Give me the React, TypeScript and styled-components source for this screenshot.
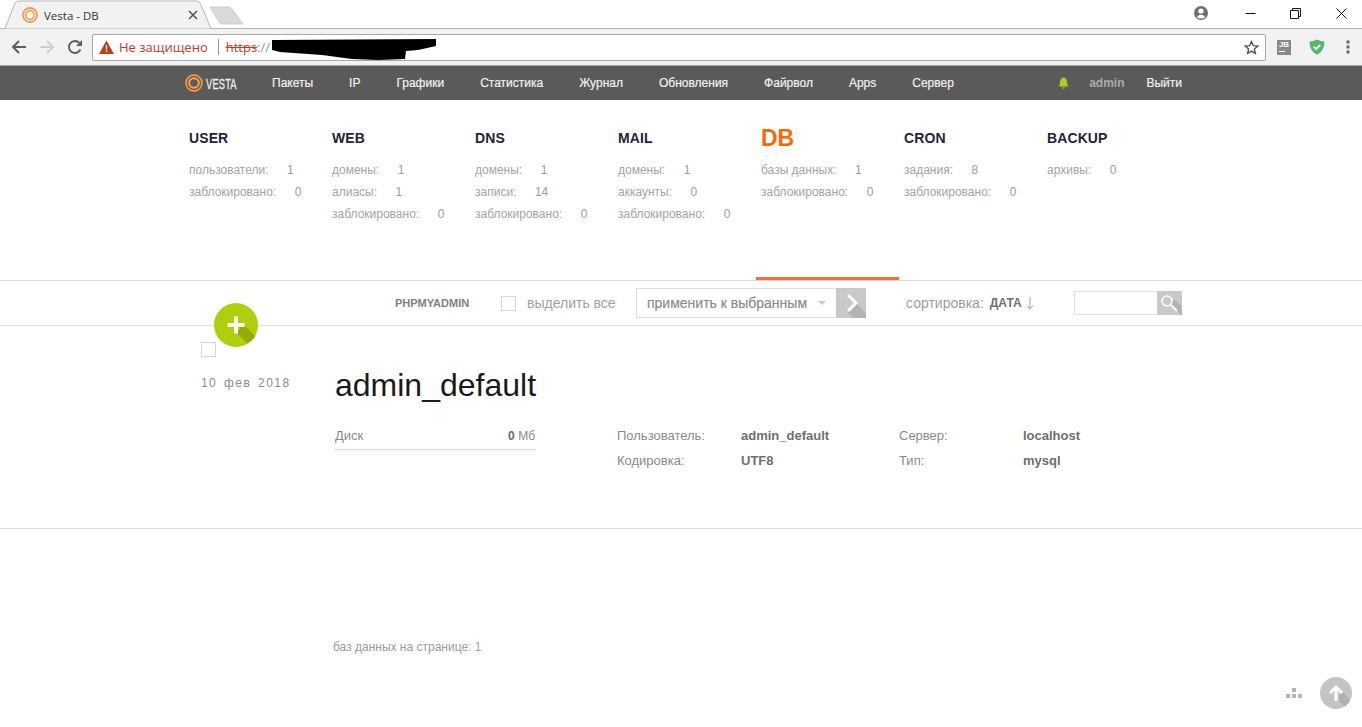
import React from "react";
import styled, {createGlobalStyle} from "styled-components";

const GlobalStyle = createGlobalStyle`
    html, body {
        margin: 0;
        padding: 0;
        background: #fff;
        font-family: "Liberation Sans", Arial, sans-serif;
    }
`;

const StyledRoot = styled.div`
    position: relative;
    width: 1362px;
    height: 727px;
    overflow: hidden;
`;

/* browser chrome */

const StyledTabStrip = styled.div`
    position: relative;
    height: 28px;
    display: flex;
    justify-content: flex-end;
    align-items: center;
    border-bottom: 1px solid #b5b5b5;
`;

const StyledTabShape = styled.svg`
    position: absolute;
    left: 0;
    top: 0;
`;

const StyledTabContent = styled.div`
    position: absolute;
    left: 22px;
    top: 6px;
    width: 176px;
    height: 18px;
    display: flex;
    align-items: center;
    gap: 6px;
    font-family: "Open Sans", sans-serif;
    font-size: 11.5px;
    color: #333;
`;

const StyledTabTitle = styled.span`
    flex: 1;
`;

const StyledWindowControls = styled.div`
    display: flex;
    align-items: center;
    height: 28px;
    margin-top: -2px;
`;

const StyledWindowButton = styled.div<{$width: number}>`
    width: ${props => props.$width}px;
    display: flex;
    justify-content: center;
    align-items: center;
`;

const StyledToolbar = styled.div`
    height: 37px;
    display: flex;
    align-items: center;
    background: #f2f2f2;
    padding-left: 4px;
    box-sizing: border-box;
    border-bottom: 1px solid #a8a8a8;
`;

const StyledNavIcon = styled.div`
    width: 29px;
    display: flex;
    justify-content: center;
    margin-right: -1px;
`;

const StyledAddressBar = styled.div`
    width: 1174px;
    height: 27px;
    margin-left: 4px;
    background: #fff;
    border: 1px solid #a9a9a9;
    border-radius: 2px;
    box-sizing: border-box;
    display: flex;
    align-items: center;
    padding-left: 6px;
    font-family: "Open Sans", sans-serif;
    font-size: 13px;
`;

const StyledInsecure = styled.span`
    color: #c5391f;
    margin-left: 5px;
    padding-right: 10px;
    border-right: 1px solid #9a9a9a;
    line-height: 16px;
`;

const StyledProtocol = styled.span`
    color: #c5391f;
    text-decoration: line-through;
    margin-left: 7px;
`;

const StyledSlashes = styled.span`
    color: #7a9ab0;
`;

const StyledRedaction = styled.svg`
    position: absolute;
    left: 272px;
    top: 38px;
`;

const StyledStar = styled.div`
    margin-left: auto;
    margin-right: 6px;
    display: flex;
`;

const StyledExtensions = styled.div`
    display: flex;
    align-items: center;
    margin-left: 11px;
    gap: 18px;
`;

const StyledJb = styled.div`
    width: 14px;
    height: 15px;
    background: #8a8a8a;
    color: #fff;
    font-size: 8px;
    font-weight: bold;
    line-height: 9px;
    text-align: center;

    &::after {
        content: "";
        display: block;
        width: 6px;
        height: 1px;
        margin: 2px 0 0 2px;
        background: #fff;
    }
`;

const StyledKebab = styled.svg`
    margin-left: 3px;
`;

/* panel nav */

const StyledNav = styled.div`
    height: 34px;
    background: #5a5a5a;
    display: flex;
    align-items: center;
    padding: 0 180px 0 185px;
    font-size: 12px;
    color: #f0f0f0;
    -webkit-text-stroke: 0.2px #f0f0f0;
`;

const StyledLogo = styled.div`
    display: flex;
    align-items: center;
    gap: 3px;
    margin-right: 35px;
    font-size: 15px;
`;

const StyledLogoText = styled.span`
    display: inline-block;
    width: 31px;
    transform: scaleX(0.62);
    transform-origin: left center;
    letter-spacing: 0.3px;
    -webkit-text-stroke: 0.3px #f0f0f0;
`;

const StyledMenu = styled.div`
    display: flex;
    gap: 36px;
`;

const StyledUserMenu = styled.div`
    margin-left: auto;
    display: flex;
    align-items: center;
`;

const StyledAdmin = styled.span`
    color: #a4adb0;
    font-weight: bold;
    -webkit-text-stroke: 0;
    margin-left: 20px;
    margin-right: 22px;
`;

/* stats */

const StyledStats = styled.div`
    height: 181px;
    padding-left: 189px;
    display: flex;
    align-items: flex-start;
    box-sizing: border-box;
    border-bottom: 1px solid #dddddd;
`;

const StyledStatColumn = styled.div<{$active?: boolean}>`
    position: relative;
    width: 143px;
    height: 180px;
    padding-top: 29px;
    box-sizing: border-box;

    ${props => props.$active && `
        &::after {
            content: "";
            position: absolute;
            left: -5px;
            bottom: 0;
            width: 143px;
            height: 3px;
            background: #f56b43;
        }
    `}
`;

const StyledStatTitle = styled.div<{$active?: boolean}>`
    height: 18px;
    line-height: 18px;
    margin-bottom: 12px;
    font-weight: bold;
    font-size: ${props => props.$active ? "23px" : "14px"};
    color: ${props => props.$active ? "#ff6701" : "#23233a"};
    letter-spacing: ${props => props.$active ? "0" : "0.1px"};
`;

const StyledStatRow = styled.div`
    height: 22px;
    line-height: 22px;
    font-size: 12px;
    color: #a3a3a3;
    white-space: nowrap;
`;

const StyledStatValue = styled.span`
    margin-left: 18.5px;
    color: #a09a92;
`;

/* action bar */

const StyledActionBar = styled.div`
    height: 45px;
    box-sizing: border-box;
    border-bottom: 1px solid #dddddd;
    display: flex;
    align-items: center;
    padding-left: 395px;
`;

const StyledPhpLink = styled.span`
    width: 106px;
    font-size: 11px;
    font-weight: bold;
    color: #7f7f7f;
`;

const StyledCheckbox = styled.div`
    width: 15px;
    height: 15px;
    box-sizing: border-box;
    background: #fff;
    border: 1px solid #d6d6d6;
`;

const StyledSelectAll = styled.span`
    width: 109px;
    margin-left: 11px;
    font-size: 14px;
    color: #a0a0a0;
`;

const StyledSelect = styled.div`
    width: 200px;
    height: 30px;
    box-sizing: border-box;
    border: 1px solid #dcdcdc;
    border-right: none;
    display: flex;
    align-items: center;
    padding-left: 10px;
    font-size: 14px;
    color: #8b8b8b;
    -webkit-text-stroke: 0.2px #8b8b8b;
`;

const StyledCaret = styled.span`
    margin-left: 11px;
    border-left: 4px solid transparent;
    border-right: 4px solid transparent;
    border-top: 4px solid #c8c8c8;
`;

const StyledApply = styled.svg`
    display: block;
`;

const StyledSortLabel = styled.span`
    margin-left: 40px;
    font-size: 14px;
    color: #9c9c9c;
`;

const StyledSortValue = styled.span`
    margin-left: 6px;
    font-size: 12px;
    font-weight: bold;
    color: #6f6f6f;
`;

const StyledSortArrow = styled.svg`
    margin-left: 4px;
`;

const StyledSearchInput = styled.div`
    width: 83px;
    height: 24px;
    margin-left: 40px;
    box-sizing: border-box;
    border: 1px solid #dfdfdf;
    border-right: none;
`;

/* database row */

const StyledRow = styled.div`
    height: 203px;
    box-sizing: border-box;
    border-bottom: 1px solid #dddddd;
    padding-left: 201px;
    display: grid;
    grid-template-columns: 134px 282px 282px 1fr;
    grid-template-rows: 45px auto;
`;

const StyledDateCell = styled.div`
    grid-row: 1 / 3;
    padding-top: 16px;
`;

const StyledDate = styled.div`
    margin-top: 19px;
    font-size: 12px;
    color: #8f8a84;
    letter-spacing: 1.45px;
    word-spacing: 2px;
`;

const StyledDbName = styled.div`
    grid-column: 2 / 5;
    padding-top: 41px;
    font-size: 32px;
    line-height: 36px;
    color: #1a1a1a;
`;

const StyledDisk = styled.div`
    width: 200px;
    margin-top: 57px;
    height: 22px;
    box-sizing: border-box;
    border-bottom: 1px dotted #c0c0c0;
    display: flex;
    justify-content: space-between;
    font-size: 13px;
    line-height: 16px;
    color: #8a8a8a;
`;

const StyledDiskAmount = styled.span`
    font-size: 12px;
`;

const StyledDiskValue = styled.b`
    color: #6a6a6a;
`;

const StyledDetails = styled.div<{$labelWidth: number}>`
    margin-top: 57px;
    display: grid;
    grid-template-columns: ${props => props.$labelWidth}px 1fr;
    grid-auto-rows: 25px;
    font-size: 13px;
    line-height: 16px;
    color: #8a8a8a;
`;

const StyledDetailValue = styled.span`
    font-weight: bold;
    color: #6e6e6e;
`;

const StyledFooter = styled.div`
    margin-top: 110px;
    padding-left: 333px;
    font-size: 12px;
    line-height: 16px;
    color: #9a9a9a;
`;

const StyledFooterValue = styled.span`
    color: #b09a80;
`;

/* floating bits */

const StyledAddButton = styled.svg`
    position: absolute;
    left: 214px;
    top: 303px;
`;

const StyledCorner = styled.div`
    position: absolute;
    left: 1286px;
    top: 677px;
    width: 66px;
    display: flex;
    align-items: center;
    justify-content: space-between;
`;

const menu = ["Пакеты", "IP", "Графики", "Статистика", "Журнал", "Обновления", "Файрвол", "Apps", "Сервер"];

const stats = [
    {title: "USER", rows: [["пользователи:", "1"], ["заблокировано:", "0"]]},
    {title: "WEB", rows: [["домены:", "1"], ["алиасы:", "1"], ["заблокировано:", "0"]]},
    {title: "DNS", rows: [["домены:", "1"], ["записи:", "14"], ["заблокировано:", "0"]]},
    {title: "MAIL", rows: [["домены:", "1"], ["аккаунты:", "0"], ["заблокировано:", "0"]]},
    {title: "DB", active: true, rows: [["базы данных:", "1"], ["заблокировано:", "0"]]},
    {title: "CRON", rows: [["задания:", "8"], ["заблокировано:", "0"]]},
    {title: "BACKUP", rows: [["архивы:", "0"]]},
];

function VestaRing({size}: {size: number}) {
    return (
        <svg width={size} height={size} viewBox="0 0 18 18">
            <circle cx="9" cy="9" r="8" fill="none" stroke="#f7913a" strokeWidth="1.8"/>
            <circle cx="9" cy="9" r="4.8" fill="none" stroke="#f7a35c" strokeWidth="2"/>
        </svg>
    );
}

export default function App() {
    return (
        <StyledRoot>
            <GlobalStyle/>
            <StyledTabStrip>
                <StyledTabShape width="250" height="29">
                    <path d="M0 28.5 H5 L15 3 Q16 1 19 1 H196 Q199 1 200 3 L211 28.5" fill="#f2f2f2" stroke="#b5b5b5"/>
                    <path d="M210 7 H229 Q231 7 232 9 L243 24 H222 Q220 24 219 22 Z" fill="#d9d9d9" stroke="#cfcfcf"/>
                </StyledTabShape>
                <StyledTabContent>
                    <VestaRing size={16}/>
                    <StyledTabTitle>Vesta - DB</StyledTabTitle>
                    <svg width="10" height="10" viewBox="0 0 10 10">
                        <path d="M1 1 L9 9 M9 1 L1 9" stroke="#555" strokeWidth="1.6"/>
                    </svg>
                </StyledTabContent>
                <StyledWindowControls>
                    <StyledWindowButton $width={58}>
                        <svg width="16" height="16" viewBox="0 0 16 16">
                            <circle cx="8" cy="8" r="7" fill="#707070"/>
                            <circle cx="8" cy="6" r="2.6" fill="#fff"/>
                            <path d="M3.6 12 Q8 7.6 12.4 12 Q8 15 3.6 12" fill="#fff"/>
                        </svg>
                    </StyledWindowButton>
                    <StyledWindowButton $width={40}>
                        <svg width="11" height="11" viewBox="0 0 11 11">
                            <path d="M0.5 5.5 H10.5" stroke="#111"/>
                        </svg>
                    </StyledWindowButton>
                    <StyledWindowButton $width={50}>
                        <svg width="11" height="11" viewBox="0 0 11 11">
                            <path d="M2.5 2.5 V0.5 H10.5 V8.5 H8.5 M0.5 2.5 H8.5 V10.5 H0.5 Z" stroke="#111" fill="none"/>
                        </svg>
                    </StyledWindowButton>
                    <StyledWindowButton $width={42}>
                        <svg width="11" height="11" viewBox="0 0 11 11">
                            <path d="M0.5 0.5 L10.5 10.5 M10.5 0.5 L0.5 10.5" stroke="#111"/>
                        </svg>
                    </StyledWindowButton>
                </StyledWindowControls>
            </StyledTabStrip>

            <StyledToolbar>
                <StyledNavIcon>
                    <svg width="16" height="16" viewBox="0 0 16 16">
                        <path d="M15 8 H2 M8 2 L2 8 L8 14" fill="none" stroke="#5f5f5f" strokeWidth="2"/>
                    </svg>
                </StyledNavIcon>
                <StyledNavIcon>
                    <svg width="16" height="16" viewBox="0 0 16 16">
                        <path d="M1 8 H14 M8 2 L14 8 L8 14" fill="none" stroke="#cfcfcf" strokeWidth="2"/>
                    </svg>
                </StyledNavIcon>
                <StyledNavIcon>
                    <svg width="16" height="16" viewBox="0 0 16 16">
                        <path d="M13.4 10.5 A6 6 0 1 1 12.4 3.9" fill="none" stroke="#5f5f5f" strokeWidth="2"/>
                        <path d="M15 1 V7 H9 Z" fill="#5f5f5f"/>
                    </svg>
                </StyledNavIcon>
                <StyledAddressBar>
                    <svg width="15" height="14" viewBox="0 0 15 14">
                        <path d="M7.5 0.5 L15 14 H0 Z" fill="#c5391f"/>
                        <path d="M6.8 5 H8.2 V9.5 H6.8 Z M6.8 10.5 H8.2 V12 H6.8 Z" fill="#fff"/>
                    </svg>
                    <StyledInsecure>Не защищено</StyledInsecure>
                    <StyledProtocol>https</StyledProtocol>
                    <StyledSlashes>://</StyledSlashes>
                    <StyledStar>
                        <svg width="15" height="15" viewBox="0 0 24 24">
                            <path d="M12 2.5 L14.9 9 L22 9.7 L16.6 14.4 L18.2 21.4 L12 17.7 L5.8 21.4 L7.4 14.4 L2 9.7 L9.1 9 Z" fill="none" stroke="#555" strokeWidth="2.2"/>
                        </svg>
                    </StyledStar>
                </StyledAddressBar>
                <StyledExtensions>
                    <StyledJb>JB</StyledJb>
                    <svg width="16" height="16" viewBox="0 0 16 16">
                        <path d="M8 0.5 Q12 2.5 15.5 2.5 Q15.5 12 8 15.8 Q0.5 12 0.5 2.5 Q4 2.5 8 0.5 Z" fill="#57b76f"/>
                        <path d="M4.8 7.8 L7.2 10 L11.2 5.8" fill="none" stroke="#fff" strokeWidth="1.8"/>
                    </svg>
                    <StyledKebab width="4" height="14" viewBox="0 0 4 14">
                        <path d="M0.5 0.5 H3.5 V3.5 H0.5 Z M0.5 5.5 H3.5 V8.5 H0.5 Z M0.5 10.5 H3.5 V13.5 H0.5 Z" fill="#666"/>
                    </StyledKebab>
                </StyledExtensions>
            </StyledToolbar>
            <StyledRedaction width="165" height="23" viewBox="0 0 165 23">
                <path d="M0 2 L164 1 L164 8 L146 12 L134 13 L133 21 L106 22 L80 21 L50 17 L8 14 L0 12 Z" fill="#000"/>
            </StyledRedaction>

            <StyledNav>
                <StyledLogo>
                    <VestaRing size={18}/>
                    <StyledLogoText>VESTA</StyledLogoText>
                </StyledLogo>
                <StyledMenu>
                    {menu.map(item => <span key={item}>{item}</span>)}
                </StyledMenu>
                <StyledUserMenu>
                    <svg width="11" height="12" viewBox="0 0 11 12">
                        <path d="M5.5 0.5 Q9 1 9 5 Q9 8 10.5 9.5 H0.5 Q2 8 2 5 Q2 1 5.5 0.5 Z M4 10.3 H7 Q6.5 11.8 5.5 11.8 Q4.5 11.8 4 10.3 Z" fill="#aecb1f"/>
                    </svg>
                    <StyledAdmin>admin</StyledAdmin>
                    <span>Выйти</span>
                </StyledUserMenu>
            </StyledNav>

            <StyledStats>
                {stats.map(column => (
                    <StyledStatColumn key={column.title} $active={column.active}>
                        <StyledStatTitle $active={column.active}>{column.title}</StyledStatTitle>
                        {column.rows.map(([label, value]) => (
                            <StyledStatRow key={label}>
                                {label}<StyledStatValue>{value}</StyledStatValue>
                            </StyledStatRow>
                        ))}
                    </StyledStatColumn>
                ))}
            </StyledStats>

            <StyledActionBar>
                <StyledPhpLink>PHPMYADMIN</StyledPhpLink>
                <StyledCheckbox/>
                <StyledSelectAll>выделить все</StyledSelectAll>
                <StyledSelect>
                    применить к выбранным
                    <StyledCaret/>
                </StyledSelect>
                <StyledApply width="30" height="30" viewBox="0 0 30 30">
                    <rect width="30" height="30" fill="#c9c9c9"/>
                    <path d="M11 24 L17 30 H30 V25 L20 15 Z" fill="#b3b3b3"/>
                    <path d="M12 7 L20 15 L12 23" fill="none" stroke="#fff" strokeWidth="3"/>
                </StyledApply>
                <StyledSortLabel>сортировка:</StyledSortLabel>
                <StyledSortValue>ДАТА</StyledSortValue>
                <StyledSortArrow width="8" height="14" viewBox="0 0 8 14">
                    <path d="M4 1 V12.5 M1 9.5 L4 13 L7 9.5" fill="none" stroke="#a0a0a0"/>
                </StyledSortArrow>
                <StyledSearchInput/>
                <svg width="25" height="24" viewBox="0 0 25 24">
                    <rect width="25" height="24" fill="#c9c9c9"/>
                    <path d="M14 14 L24 24 H25 V16 L17 8 Z" fill="#b3b3b3"/>
                    <circle cx="10" cy="10" r="5" fill="none" stroke="#fff" strokeWidth="1.5"/>
                    <path d="M14 14 L20 20" stroke="#fff" strokeWidth="2"/>
                </svg>
            </StyledActionBar>

            <StyledRow>
                <StyledDateCell>
                    <StyledCheckbox/>
                    <StyledDate>10 фев 2018</StyledDate>
                </StyledDateCell>
                <StyledDbName>admin_default</StyledDbName>
                <StyledDisk>
                    <span>Диск</span>
                    <StyledDiskAmount><StyledDiskValue>0</StyledDiskValue> Мб</StyledDiskAmount>
                </StyledDisk>
                <StyledDetails $labelWidth={124}>
                    <span>Пользователь:</span>
                    <StyledDetailValue>admin_default</StyledDetailValue>
                    <span>Кодировка:</span>
                    <StyledDetailValue>UTF8</StyledDetailValue>
                </StyledDetails>
                <StyledDetails $labelWidth={124}>
                    <span>Сервер:</span>
                    <StyledDetailValue>localhost</StyledDetailValue>
                    <span>Тип:</span>
                    <StyledDetailValue>mysql</StyledDetailValue>
                </StyledDetails>
            </StyledRow>

            <StyledFooter>
                баз данных на странице: <StyledFooterValue>1</StyledFooterValue>
            </StyledFooter>

            <StyledAddButton width="44" height="44" viewBox="0 0 44 44">
                <defs>
                    <clipPath id="addClip"><circle cx="22" cy="22" r="22"/></clipPath>
                </defs>
                <circle cx="22" cy="22" r="22" fill="#aecf0c"/>
                <path d="M20 27 H26 V22 H30 L44 36 V44 H37 Z" fill="#96ab0a" clipPath="url(#addClip)"/>
                <path d="M22 13.5 V30.5 M13.5 22 H30.5" stroke="#fff" strokeWidth="4"/>
            </StyledAddButton>

            <StyledCorner>
                <svg width="16" height="10" viewBox="0 0 16 10">
                    <path d="M6 0 H10 V4 H6 Z M0 6 H4 V10 H0 Z M6 6 H10 V10 H6 Z M12 6 H16 V10 H12 Z" fill="#b5b5b5"/>
                </svg>
                <svg width="32" height="32" viewBox="0 0 32 32">
                    <defs>
                        <clipPath id="topClip"><circle cx="16" cy="16" r="16"/></clipPath>
                    </defs>
                    <circle cx="16" cy="16" r="16" fill="#c4c4c4"/>
                    <path d="M19 16 V24 L28 33 L34 28 L22 14 Z" fill="#b0b0b0" clipPath="url(#topClip)"/>
                    <path d="M16 24 V10 M10 16 L16 10 L22 16" fill="none" stroke="#fff" strokeWidth="3"/>
                </svg>
            </StyledCorner>
        </StyledRoot>
    );
}
